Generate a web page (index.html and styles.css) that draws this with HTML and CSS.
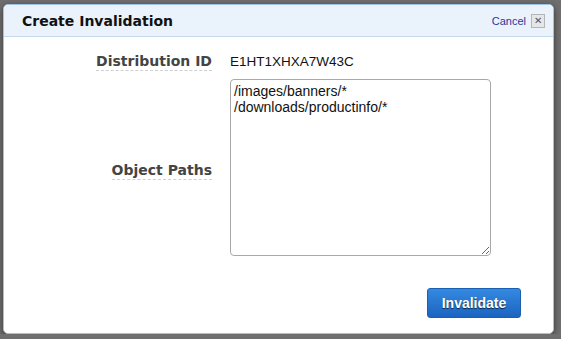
FILE: index.html
```html
<!DOCTYPE html>
<html lang="en">
<head>
  <meta charset="UTF-8">
  <title>Create Invalidation</title>
  <link rel="stylesheet" href="styles.css">
</head>
<body>

  <div class="dialog">
    <div class="dialog-header">
      <h2>Create Invalidation</h2>
      <a class="cancel" href="#">Cancel</a>
      <span class="close-box">&#x2715;</span>
    </div>

    <div class="dialog-body">
      <div class="form-row">
        <label class="field-label"><span>Distribution ID</span></label>
        <div class="field-value">E1HT1XHXA7W43C</div>
      </div>

      <div class="form-row paths-row">
        <label class="field-label"><span>Object Paths</span></label>
        <textarea class="paths" spellcheck="false">/images/banners/*
/downloads/productinfo/*</textarea>
      </div>

      <div class="actions">
        <button class="primary">Invalidate</button>
      </div>
    </div>
  </div>

</body>
</html>
```

FILE: styles.css
```css
body {
  margin: 0;
  background: #6f6f6f;
  font-family: "Liberation Sans", Arial, sans-serif;
}
.dialog {
  margin: 4px 0 0 3px;
  width: 549px;
  height: 328px;
  background: #fff;
  border: 1px solid #9fc3e6;
  border-radius: 5px;
  box-shadow: 0 2px 6px rgba(0, 0, 0, 0.5);
  overflow: hidden;
}
.dialog-header {
  display: flex;
  align-items: center;
  height: 31px;
  padding: 0 8px 0 18px;
  background: #eaf2fc;
  border-bottom: 1px solid #c4d8ee;
}
.dialog-header h2 {
  flex: 1;
  margin: 0;
  font-family: "DejaVu Sans", Verdana, sans-serif;
  font-size: 14px;
  color: #111;
}
.cancel {
  font-size: 11px;
  color: #1f3a9c;
  text-decoration: none;
  margin-right: 5px;
}
.close-box {
  display: inline-block;
  width: 12px;
  height: 12px;
  line-height: 12px;
  text-align: center;
  font-size: 10px;
  color: #555;
  background: #e6e6e6;
  border: 1px solid #b5b5b5;
}
.dialog-body {
  padding: 16px 0 0 0;
}
.form-row {
  display: flex;
  align-items: center;
  gap: 18px;
}
.field-label {
  width: 208px;
  text-align: right;
  font-family: "DejaVu Sans", Verdana, sans-serif;
  font-weight: bold;
  font-size: 14px;
  color: #444;
}
.field-label span {
  border-bottom: 1px dashed #cfcfcf;
  padding-bottom: 1px;
}
.paths-row .field-label {
  padding-top: 4px;
}
.field-value {
  font-size: 13.5px;
  color: #111;
}
.paths-row {
  margin-top: 10px;
}
.paths {
  width: 261px;
  height: 177px;
  box-sizing: border-box;
  margin: 0;
  padding: 3px 3px;
  font-family: "Liberation Sans", Arial, sans-serif;
  font-size: 14px;
  line-height: 16px;
  color: #111;
  border: 1px solid #a8a8a8;
  border-radius: 4px;
  resize: both;
}
.actions {
  display: flex;
  justify-content: flex-end;
  padding: 32px 32px 0 0;
}
.primary {
  width: 94px;
  height: 30px;
  font-family: "Liberation Sans", Arial, sans-serif;
  font-weight: bold;
  font-size: 14px;
  color: #fff;
  text-shadow: 0 1px 1px rgba(0, 0, 0, 0.7);
  background: linear-gradient(#3489e0, #1b64c1);
  border: 1px solid #1a5fb0;
  border-radius: 3px;
  cursor: pointer;
}
```
